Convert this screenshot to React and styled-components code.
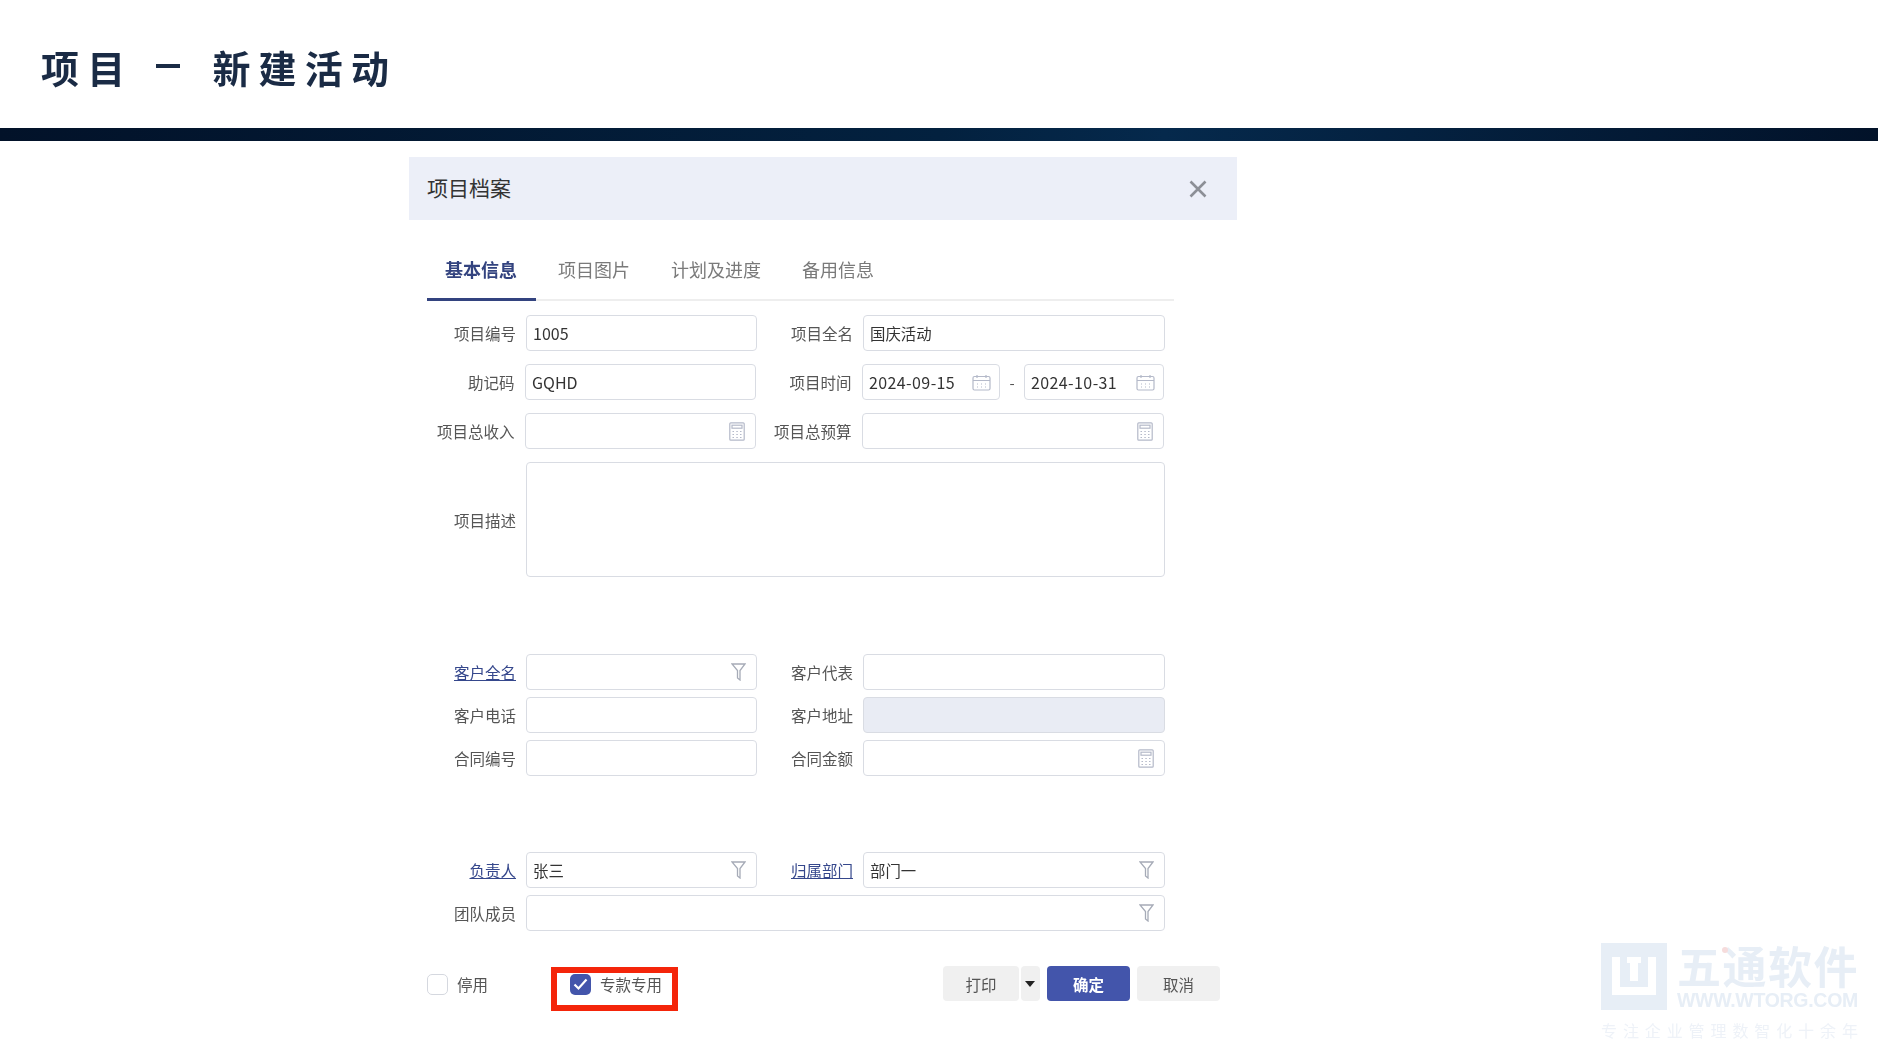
import React from "react";
import styled, { createGlobalStyle } from "styled-components";

const Global = createGlobalStyle`
  html, body { margin: 0; padding: 0; background: #fff; }
  body { font-family: "Noto Sans CJK SC", "Noto Sans", sans-serif; }
  * { box-sizing: border-box; }
`;

const Page = styled.div`
  position: relative;
  width: 1878px;
  height: 1056px;
  overflow: hidden;
  background: #fff;
`;

const Header = styled.header`
  height: 128px;
  padding: 4px 0 0 41px;
  display: flex;
  align-items: center;
`;

const Title = styled.h1`
  margin: 0;
  display: flex;
  align-items: center;
  font-size: 38px;
  font-weight: 700;
  letter-spacing: 8.2px;
  color: #1a2b45;
  white-space: pre;
  filter: blur(0.4px);
`;

const TitleDash = styled.span`
  width: 24px;
  height: 4px;
  margin: 0 32px 0 23px;
  background: #1a2b45;
`;

const Bar = styled.div`
  height: 13px;
  background: linear-gradient(90deg, #021229 0%, #03213f 50%, #05294c 62%, #021229 100%);
`;

const Dialog = styled.section`
  width: 828px;
  margin: 16px 0 0 409px;
  filter: blur(0.45px);
`;

const DialogHead = styled.div`
  height: 63px;
  padding: 0 30px 4px 18px;
  display: flex;
  align-items: center;
  justify-content: space-between;
  background: #eceff8;
`;

const DialogTitle = styled.div`
  font-size: 21px;
  color: #333;
`;

const CloseIcon = styled.svg`
  margin-top: 4px;
`;

const Tabs = styled.nav`
  width: 747px;
  height: 81px;
  margin-left: 18px;
  display: flex;
  align-items: flex-end;
  border-bottom: 2px solid #eeeeee;
`;

const Tab = styled.div`
  height: 60px;
  margin-bottom: -2px;
  padding: 0 0 0 ${p => (p.$first ? "18px" : "22px")};
  width: ${p => p.$w}px;
  font-size: 18px;
  line-height: 56px;
  font-weight: ${p => (p.$active ? 600 : 400)};
  color: ${p => (p.$active ? "#33437f" : "#7a7a7a")};
  white-space: nowrap;
  border-bottom: 3px solid ${p => (p.$active ? "#33437f" : "transparent")};
`;

const Form = styled.div`
  padding: 14px 0 0 18px;
`;

const Section = styled.div`
  display: grid;
  grid-template-columns: 89px 241px 96px 312px;
  row-gap: ${p => p.$gap}px;
  margin-bottom: ${p => p.$after}px;
`;

const Label = styled.label`
  height: ${p => (p.$tall ? 115 : 36)}px;
  padding-right: ${p => (p.$nudge ? 1.5 : 0)}px;
  display: flex;
  align-items: center;
  justify-content: flex-end;
  font-size: 15.5px;
  white-space: nowrap;
  color: ${p => (p.$link ? "#35478c" : "#555")};
  text-decoration: ${p => (p.$link ? "underline" : "none")};
`;

const FieldWrap = styled.div`
  margin-left: ${p => (p.$nudge ? 9 : 10)}px;
  margin-right: ${p => (p.$nudge ? 1 : 0)}px;
  grid-column: ${p => p.$span || "auto"};
  min-width: 0;
`;

const Input = styled.div`
  height: ${p => p.$h || 36}px;
  padding: 0 10px 0 6px;
  display: flex;
  align-items: center;
  justify-content: space-between;
  font-size: 16px;
  color: #333;
  border: 1.5px solid #d9dce3;
  border-radius: 4px;
  background: ${p => (p.$disabled ? "#e9ecf4" : "#fff")};
  white-space: nowrap;
  ${p => p.$w && `width: ${p.$w}px; flex: none;`}
`;

const CnValue = styled.span`
  font-size: 15.4px;
`;

const DateValue = styled.span`
  letter-spacing: 0.4px;
`;

const DateRow = styled.div`
  display: flex;
  align-items: center;
`;

const Dash = styled.span`
  width: 24px;
  flex: none;
  text-align: center;
  font-size: 15px;
  color: #555;
`;

const Footer = styled.div`
  display: flex;
  align-items: flex-start;
  height: 44px;
  padding-left: 18px;
`;

const CheckGroup = styled.div`
  height: 21px;
  display: flex;
  align-items: center;
  gap: 9px;
  font-size: 15.5px;
  line-height: 21px;
  color: #555;
  margin-top: ${p => p.$top || 0}px;
`;

const Box = styled.span`
  width: 21px;
  height: 21px;
  border-radius: 5px;
  display: flex;
  align-items: center;
  justify-content: center;
  border: ${p => (p.$on ? "none" : "1.5px solid #d5d8df")};
  background: ${p => (p.$on ? "#4355ab" : "#fff")};
`;

const RedBox = styled.div`
  width: 127px;
  height: 44px;
  margin-left: 63px;
  padding: 1px 0 0 13px;
  display: flex;
  align-items: flex-start;
  border: 6px solid #f4250a;
`;

const Buttons = styled.div`
  margin: -1px 0 0 265px;
  display: flex;
  align-items: flex-start;
`;

const Btn = styled.button`
  height: 35px;
  width: ${p => p.$w}px;
  margin-left: ${p => p.$ml || 0}px;
  padding: ${p => (p.$caret ? "0 2px 0 0" : "0")};
  display: flex;
  align-items: center;
  justify-content: center;
  font-family: inherit;
  font-size: 15.5px;
  font-weight: ${p => (p.$primary ? 600 : 400)};
  color: ${p => (p.$primary ? "#fff" : "#555")};
  background: ${p => (p.$primary ? "#4355ab" : "#f0f0f0")};
  border: none;
  border-radius: 4px;
`;

const Watermark = styled.div`
  position: absolute;
  left: 1601px;
  top: 940px;
  width: 262px;
  color: #e7eef6;
  filter: blur(0.5px);
`;

const WmTop = styled.div`
  display: flex;
  gap: 10px;
`;

const WmLogo = styled.svg`
  flex: none;
  margin-top: 3px;
`;

const WmRight = styled.div`
  position: relative;
  display: flex;
  flex-direction: column;
`;

const WmDot = styled.span`
  position: absolute;
  left: 45px;
  top: 7px;
  width: 6px;
  height: 6px;
  border-radius: 50%;
  background: #f6dcdc;
`;

const WmName = styled.div`
  font-size: 44px;
  line-height: 50px;
  font-weight: 700;
  letter-spacing: 1.5px;
  white-space: nowrap;
`;

const WmUrl = styled.div`
  font-size: 19.5px;
  line-height: 21px;
  font-weight: 700;
  font-family: "Liberation Sans", sans-serif;
  letter-spacing: -0.3px;
  white-space: nowrap;
`;

const WmSlogan = styled.div`
  margin-top: 9px;
  font-size: 16px;
  line-height: 20px;
  letter-spacing: 5.9px;
  white-space: nowrap;
  color: #eef2f8;
`;

const CalendarIcon = styled.svg`
  margin-right: -2px;
  flex: none;
`;

const stroke = "#b4b9c9";

const Calendar = () => (
  <CalendarIcon width="19" height="17" viewBox="0 0 19 17" fill="none" stroke={stroke} strokeWidth="1.2">
    <rect x="1" y="2.5" width="17" height="13.5" rx="1.5" />
    <path d="M1 6.5h17M5 1v3M14 1v3" />
    <path d="M5 10h1.5M9 10h1.5M13 10h1.5M5 13h1.5M9 13h1.5M13 13h1.5" strokeDasharray="1 1" />
  </CalendarIcon>
);

const Calc = () => (
  <svg width="16" height="19" viewBox="0 0 16 19" fill="none" stroke={stroke} strokeWidth="1.2">
    <rect x="0.8" y="0.8" width="14.4" height="17.4" rx="1" />
    <rect x="3" y="3.2" width="10" height="3" />
    <path d="M3.5 9.5h1.5M7.3 9.5h1.5M11 9.5h1.5M3.5 12.5h1.5M7.3 12.5h1.5M11 12.5h1.5M3.5 15.5h1.5M7.3 15.5h1.5M11 15.5h1.5" />
  </svg>
);

const Funnel = () => (
  <svg width="15" height="18" viewBox="0 0 15 18" fill="none" stroke="#a6abb7" strokeWidth="1.3">
    <path d="M1 1h13L9 7.5V17L6.5 15V7.5z" />
  </svg>
);

const Close = () => (
  <CloseIcon width="18" height="18" viewBox="0 0 18 18" stroke="#8c8f96" strokeWidth="2.6">
    <path d="M1.5 1.5l15 15M16.5 1.5l-15 15" />
  </CloseIcon>
);

const Check = () => (
  <svg width="15" height="13" viewBox="0 0 15 13" fill="none" stroke="#fff" strokeWidth="2.2">
    <path d="M1.5 6.5l4 4 8-9" />
  </svg>
);

const Caret = () => (
  <svg width="10" height="6" viewBox="0 0 10 6" fill="#222">
    <path d="M0 0h10L5 6z" />
  </svg>
);

const Logo = () => (
  <WmLogo width="66" height="67" viewBox="0 0 66 67">
    <rect width="66" height="67" fill="#e7eef6" />
    <path d="M11 14v38h44V14h-8v30H19V14z M26 14h14v6h-3v18h-8V20h-3z" fill="#fff" />
  </WmLogo>
);

export default function App() {
  return (
    <Page>
      <Global />
      <Header>
        <Title>
          项目<TitleDash />新建活动
        </Title>
      </Header>
      <Bar />
      <Dialog>
        <DialogHead>
          <DialogTitle>项目档案</DialogTitle>
          <Close />
        </DialogHead>
        <Tabs>
          <Tab $active $first $w={109}>基本信息</Tab>
          <Tab $w={113}>项目图片</Tab>
          <Tab $w={131}>计划及进度</Tab>
          <Tab $w={120}>备用信息</Tab>
        </Tabs>
        <Form>
          <Section $gap={13} $after={77}>
            <Label>项目编号</Label>
            <FieldWrap><Input>1005</Input></FieldWrap>
            <Label>项目全名</Label>
            <FieldWrap><Input><CnValue>国庆活动</CnValue></Input></FieldWrap>
            <Label $nudge>助记码</Label>
            <FieldWrap $nudge><Input>GQHD</Input></FieldWrap>
            <Label $nudge>项目时间</Label>
            <FieldWrap $nudge>
              <DateRow>
                <Input $w={138}><DateValue>2024-09-15</DateValue><Calendar /></Input>
                <Dash>-</Dash>
                <Input $w={140}><DateValue>2024-10-31</DateValue><Calendar /></Input>
              </DateRow>
            </FieldWrap>
            <Label $nudge>项目总收入</Label>
            <FieldWrap $nudge><Input><span /><Calc /></Input></FieldWrap>
            <Label $nudge>项目总预算</Label>
            <FieldWrap $nudge><Input><span /><Calc /></Input></FieldWrap>
            <Label $tall>项目描述</Label>
            <FieldWrap $span="span 3"><Input $h={115} /></FieldWrap>
          </Section>
          <Section $gap={7} $after={76}>
            <Label $link>客户全名</Label>
            <FieldWrap><Input><span /><Funnel /></Input></FieldWrap>
            <Label>客户代表</Label>
            <FieldWrap><Input /></FieldWrap>
            <Label>客户电话</Label>
            <FieldWrap><Input /></FieldWrap>
            <Label>客户地址</Label>
            <FieldWrap><Input $disabled /></FieldWrap>
            <Label>合同编号</Label>
            <FieldWrap><Input /></FieldWrap>
            <Label>合同金额</Label>
            <FieldWrap><Input><span /><Calc /></Input></FieldWrap>
          </Section>
          <Section $gap={7} $after={36}>
            <Label $link>负责人</Label>
            <FieldWrap><Input><CnValue>张三</CnValue><Funnel /></Input></FieldWrap>
            <Label $link>归属部门</Label>
            <FieldWrap><Input><CnValue>部门一</CnValue><Funnel /></Input></FieldWrap>
            <Label>团队成员</Label>
            <FieldWrap $span="span 3"><Input><span /><Funnel /></Input></FieldWrap>
          </Section>
        </Form>
        <Footer>
          <CheckGroup $top={7}>
            <Box />
            停用
          </CheckGroup>
          <RedBox>
            <CheckGroup>
              <Box $on><Check /></Box>
              专款专用
            </CheckGroup>
          </RedBox>
          <Buttons>
            <Btn $w={76}>打印</Btn>
            <Btn $w={19} $ml={2} $caret><Caret /></Btn>
            <Btn $w={83} $ml={7} $primary>确定</Btn>
            <Btn $w={83} $ml={7}>取消</Btn>
          </Buttons>
        </Footer>
      </Dialog>
      <Watermark>
        <WmTop>
          <Logo />
          <WmRight>
            <WmName>五通软件</WmName>
            <WmDot />
            <WmUrl>WWW.WTORG.COM</WmUrl>
          </WmRight>
        </WmTop>
        <WmSlogan>专注企业管理数智化十余年</WmSlogan>
      </Watermark>
    </Page>
  );
}
